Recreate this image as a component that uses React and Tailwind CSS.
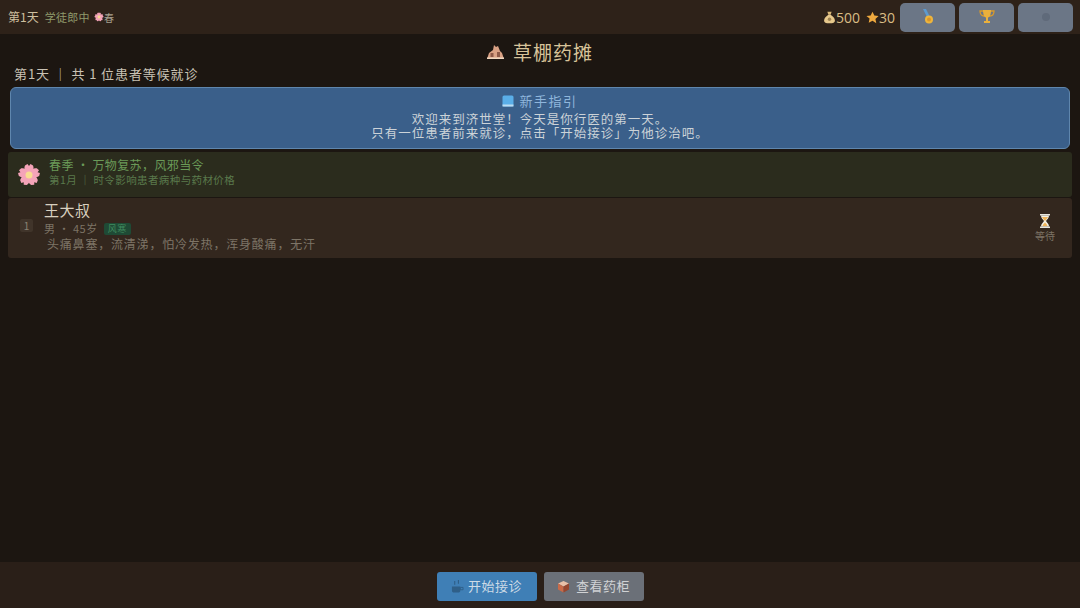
const font = { fontFamily: '"Noto Sans CJK SC","Noto Sans",sans-serif' };

function Bag({ s = 13 }) {
  return (
    <svg width={s} height={s} viewBox="0 0 12 12">
      <path d="M4 .6h4L7 3.4H5z" fill="#d8b878" />
      <path d="M5 3.4h2c2 1.200 4 3.300 4 5.300 0 2-1.500 2.600-5 2.600s-5-.6-5-2.600c0-2 2-4.100 4-5.300z" fill="#e6c88c" />
      <circle cx="6" cy="7.700" r="1.600" fill="#9c8150" />
    </svg>
  );
}
function Star() {
  return (
    <svg width="13" height="13" viewBox="0 0 12 12">
      <path d="M6 .6l1.700 3.600 3.900.5-2.900 2.700.8 3.900L6 8.900l-3.500 1.900.8-3.900L.4 4.700l3.900-.5z" fill="#eea93f" />
    </svg>
  );
}
function Medal() {
  return (
    <svg width="12" height="16" viewBox="0 0 12 16">
      <path d="M1 0h3l4 8H5z" fill="#5c9ad0" />
      <circle cx="7" cy="10.500" r="4" fill="#eeb53c" />
      <circle cx="7" cy="10.500" r="2" fill="#d9962b" />
    </svg>
  );
}
function Trophy() {
  return (
    <svg width="16" height="14" viewBox="0 0 16 14">
      <path d="M1 1h14c0 3-1.500 5-4 5H5C2.500 6 1 4 1 1z" fill="none" stroke="#d99a2b" strokeWidth="1.300" />
      <path d="M4 0h8c0 4-1 7-3 7.500V11h2v2H5v-2h2V7.500C5 7 4 4 4 0z" fill="#eab03c" />
    </svg>
  );
}
function Flower({ s = 10 }) {
  const petals = [0, 72, 144, 216, 288];
  return (
    <svg width={s} height={s} viewBox="0 0 24 24">
      {petals.map((a) => (
        <path key={a} d="M12 12C8 10 6.500 6 8 2.500L10.500 1 12 3l1.500-2L16 2.500C17.500 6 16 10 12 12z" fill="#f4a3b8" transform={`rotate(${a} 12 12)`} />
      ))}
      <circle cx="12" cy="12" r="3.500" fill="#f8dc90" />
    </svg>
  );
}
function House() {
  return (
    <svg width="17" height="15" viewBox="0 0 17 15">
      <path d="M0 15l2-6 4-3 1-5 2 2 2-1 2 5 2 2 2 6z" fill="#d9a184" />
      <rect x="3.500" y="9" width="3" height="4" fill="#8d5a48" />
      <rect x="10" y="8" width="3" height="5" fill="#8d5a48" />
      <rect y="13.500" width="17" height="1.500" fill="#f0d8c0" />
    </svg>
  );
}
function Hourglass() {
  return (
    <svg width="12" height="14" viewBox="0 0 12 14">
      <path d="M1 0h10v1.500H1zM1 12.500h10V14H1z" fill="#e8e6de" />
      <path d="M2 1.500h8c0 2.500-2 4-3 5.500 1 1.500 3 3 3 5.500H2c0-2.500 2-4 3-5.500-1-1.500-3-3-3-5.500z" fill="#f3f0e4" />
      <path d="M3 3h6c-.5 1.500-2 2.500-3 4-1-1.500-2.500-2.500-3-4zM3.500 12c.5-1.500 1.500-2.500 2.500-3.500 1 1 2 2 2.500 3.500z" fill="#eeb45a" />
    </svg>
  );
}
function Hands() {
  return (
    <svg width="13" height="13" viewBox="0 0 14 14">
      <path d="M1 7h9v4.500c0 1-1 2-2 2H3c-1 0-2-1-2-2z" fill="#2f5f88" />
      <path d="M10 8h3v2.500h-3z" fill="none" stroke="#2f5f88" />
      <path d="M4 1v4M8 0v4" stroke="#2f5f88" strokeWidth="1.200" />
    </svg>
  );
}
function Box() {
  return (
    <svg width="13" height="13" viewBox="0 0 13 13">
      <path d="M6.500 1L12 3.500 6.500 6.500 1 3.500z" fill="#e8c0a8" />
      <path d="M1 3.500l5.500 3V12.500L1 9.500z" fill="#c86a48" />
      <path d="M12 3.500l-5.500 3v6l5.500-3z" fill="#96462e" />
    </svg>
  );
}
function Book() {
  return (
    <svg width="12" height="12" viewBox="0 0 12 12">
      <rect x="0.500" y="0.500" width="11" height="11" rx="1.500" fill="#5aaee8" />
      <rect x="0.500" y="9.500" width="11" height="2" fill="#bcdcf2" />
    </svg>
  );
}

function TopButton({ children }) {
  return (
    <button className="w-[55px] h-[29px] rounded-[5px] bg-[#6b7686] flex items-center justify-center">
      {children}
    </button>
  );
}

export default function App() {
  return (
    <div style={font} className="w-[1080px] h-[608px] overflow-hidden flex flex-col bg-[#1c1611] text-[#d8cfbf]">
      <header className="h-[34px] shrink-0 bg-[#2e2219] flex items-center justify-between pl-2 pr-[7px]">
        <div className="flex items-center">
          <span className="text-[12px] text-[#cdbf9f]">第1天</span>
          <span className="text-[11px] tracking-[0.300px] text-[#8f9a6c] ml-[6px]">学徒郎中</span>
          <span className="ml-[4px] flex items-center text-[10px] text-[#a8a090]">
            <Flower />
            春
          </span>
        </div>
        <div className="flex items-center">
          <span className="flex items-center text-[14px] text-[#d9bd85] mr-[6px]" style={{ fontFamily: '"Open Sans",sans-serif' }}>
            <Bag />
            500
          </span>
          <span className="flex items-center text-[14px] text-[#d9bd85] mr-[5px]" style={{ fontFamily: '"Open Sans",sans-serif' }}>
            <Star />
            30
          </span>
          <div className="flex gap-1">
            <TopButton><Medal /></TopButton>
            <TopButton><Trophy /></TopButton>
            <TopButton><span className="w-[8px] h-[8px] rounded-full bg-[#5f6a7a]" /></TopButton>
          </div>
        </div>
      </header>

      <main className="flex-1 min-h-0 flex flex-col px-[10px]">
        <h1 className="h-[34px] flex items-center justify-center gap-[9px] text-[19px] leading-none text-[#d8c49a] pt-[1px] font-normal">
          <House />
          <span className="tracking-[1px]">草棚药摊</span>
        </h1>
        <p className="h-[12px] mb-[7px] pl-[4px] text-[13px] leading-[12px] tracking-[0.900px] text-[#c9c2b4]">第1天 ｜ 共 1 位患者等候就诊</p>

        <section className="h-[62px] pb-[4px] rounded-[6px] bg-[#3a5f8a] border border-[#5f86ad] flex flex-col items-center justify-center text-center">
          <div className="flex items-center gap-[5px] text-[13px] tracking-[1.500px] leading-[17px] text-[#8fb6dc]">
            <Book />
            新手指引
          </div>
          <div className="text-[12.500px] tracking-[1px] leading-[14px] mt-[3px] text-[#ccd3d8]">
            <div>欢迎来到济世堂！今天是你行医的第一天。</div>
            <div>只有一位患者前来就诊，点击「开始接诊」为他诊治吧。</div>
          </div>
        </section>

        <section className="-mx-[2px] mt-[3px] h-[45px] rounded-[3px] bg-[#2b2c1d] flex items-center pl-[9px]">
          <Flower s={24} />
          <div className="ml-[8px] pb-[8px]">
            <div className="text-[12px] tracking-[0.400px] leading-[17px] text-[#6a9a58]">春季 · 万物复苏，风邪当令</div>
            <div className="text-[10.500px] tracking-[0.400px] leading-[13px] text-[#5a7a4c]">第1月 ｜ 时令影响患者病种与药材价格</div>
          </div>
        </section>

        <section className="-mx-[2px] mt-[1px] h-[60px] rounded-[3px] bg-[#33271e] flex items-center pl-[12px] pr-[17px]">
          <span className="mb-[6px] w-[13px] h-[13px] bg-[#40342a] text-[10px] leading-[13px] text-center text-[#8a8274] rounded-[2px]">1</span>
          <div className="ml-[11px] flex-1 pb-[4px]">
            <div className="text-[15px] tracking-[0.500px] leading-[18px] text-[#d8cfbf]">王大叔</div>
            <div className="flex items-center text-[11px] tracking-[0.500px] leading-[15px] text-[#7c7365] mt-[2px]">
              男 · 45岁
              <span className="ml-[6px] px-[4px] text-[9px] leading-[12px] bg-[#1f4a35] text-[#3f8a5e] rounded-[2px]">风寒</span>
            </div>
            <div className="ml-[3px] text-[12px] tracking-[0.800px] leading-[15px] text-[#7d7466]">头痛鼻塞，流清涕，怕冷发热，浑身酸痛，无汗</div>
          </div>
          <div className="flex flex-col items-center gap-[1px] pb-[1px]">
            <Hourglass />
            <span className="text-[10px] leading-[13px] text-[#7c7365]">等待</span>
          </div>
        </section>
      </main>

      <footer className="h-[46px] shrink-0 bg-[#2a1f18] flex items-center justify-center gap-[7px] pt-[2px]">
        <button className="w-[100px] h-[29px] rounded-[3px] bg-[#3f7fb6] text-[13px] tracking-[0.500px] text-[#cddbe6] flex items-center justify-center gap-[4px]">
          <Hands />
          开始接诊
        </button>
        <button className="w-[100px] h-[29px] rounded-[3px] bg-[#6b7078] text-[13px] tracking-[0.500px] text-[#d0d2d4] flex items-center justify-center gap-[6px]">
          <Box />
          查看药柜
        </button>
      </footer>
    </div>
  );
}
